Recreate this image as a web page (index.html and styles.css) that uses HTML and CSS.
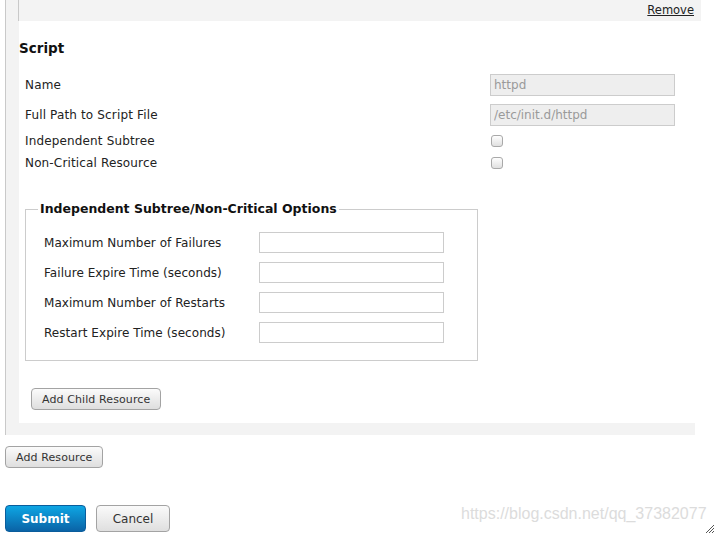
FILE: index.html
```html
<!DOCTYPE html>
<html>
<head>
<meta charset="utf-8">
<title>Resource</title>
<link rel="stylesheet" href="styles.css">
</head>
<body>
<div class="resource">
  <div class="child">
    <div class="child-head"><a href="#" class="remove">Remove</a></div>
    <div class="child-body">
      <h3 class="section-title">Script</h3>
      <div class="form-rows">
        <div class="row row-input"><span class="label">Name</span><input class="text ro" type="text" value="httpd" readonly></div>
        <div class="row row-input"><span class="label">Full Path to Script File</span><input class="text ro" type="text" value="/etc/init.d/httpd" readonly></div>
        <div class="row row-check first-check"><span class="label">Independent Subtree</span><input class="check" type="checkbox"></div>
        <div class="row row-check"><span class="label">Non-Critical Resource</span><input class="check" type="checkbox"></div>
      </div>
      <fieldset class="options">
        <legend>Independent Subtree/Non-Critical Options</legend>
        <div class="opt-row"><span class="opt-label">Maximum Number of Failures</span><input class="text opt" type="text"></div>
        <div class="opt-row"><span class="opt-label">Failure Expire Time (seconds)</span><input class="text opt" type="text"></div>
        <div class="opt-row"><span class="opt-label">Maximum Number of Restarts</span><input class="text opt" type="text"></div>
        <div class="opt-row"><span class="opt-label">Restart Expire Time (seconds)</span><input class="text opt" type="text"></div>
      </fieldset>
      <div class="child-actions"><button class="btn" type="button">Add Child Resource</button></div>
    </div>
  </div>
</div>
<div class="add-res"><button class="btn" type="button">Add Resource</button></div>
<div class="actions">
  <button class="btn-primary" type="button">Submit</button>
  <button class="btn-cancel" type="button">Cancel</button>
</div>
<div class="watermark">https://blog.csdn.net/qq_37382077</div>
<svg class="grip" width="9" height="9" viewBox="0 0 9 9"><path d="M1 9 L9 1 M4 9 L9 4 M7 9 L9 7" stroke="#555" stroke-width="1" fill="none"/></svg>
</body>
</html>
```

FILE: styles.css
```css
html, body {
  margin: 0;
  padding: 0;
  background: #fff;
}
body {
  font-family: "DejaVu Sans", Verdana, sans-serif;
  font-size: 12px;
  color: #222;
  width: 714px;
  height: 533px;
  overflow: hidden;
  position: relative;
}
.resource {
  margin-left: 5px;
  width: 676px;
  border-left: 1px solid #c9c9c9;
  background: #f3f3f3;
  padding-left: 13px;
  padding-bottom: 12px;
  box-sizing: content-box;
}
.resource .child {
  width: 676px;
}
.child-head {
  height: 21px;
  margin-left: -1px;
  margin-right: -6px;
  border-left: 1px solid #c9c9c9;
  background: #f3f3f3;
  text-align: right;
  padding-right: 7px;
  line-height: 20px;
}
.remove {
  color: #222;
  font-size: 11.5px;
  text-decoration: underline;
}
.child-body {
  background: #fff;
  padding-top: 18px;
  padding-bottom: 13px;
}
.section-title {
  margin: 0;
  font-size: 13.5px;
  line-height: 18px;
  font-weight: bold;
  color: #111;
}
.form-rows {
  margin-top: 17px;
  padding-left: 6px;
}
.row {
  display: flex;
  align-items: center;
  height: 22px;
}
.row-input + .row-input {
  margin-top: 8px;
}
.first-check {
  margin-top: 4px;
}
.label {
  width: 465px;
  flex: none;
  letter-spacing: 0.15px;
}
.text {
  box-sizing: border-box;
  height: 22px;
  width: 185px;
  margin: 0;
  border: 1px solid #cccccc;
  background: #fff;
  padding: 0 3px;
  font-family: "DejaVu Sans", Verdana, sans-serif;
  font-size: 12px;
  color: #222;
  outline: none;
}
.text.ro {
  background: #eeeeee;
  color: #9a9a9a;
}
.check {
  appearance: none;
  -webkit-appearance: none;
  width: 12px;
  height: 12px;
  margin: 0 0 0 1px;
  border: 1px solid #a9a9a9;
  border-radius: 3px;
  background: linear-gradient(#fefefe, #e0e0e0);
  box-sizing: border-box;
}
.options {
  margin: 26px 0 0 6px;
  width: 453px;
  box-sizing: border-box;
  min-width: 0;
  border: 1px solid #cccccc;
  padding: 0 0 17px 12px;
}
.options legend {
  padding: 0 2px;
  font-size: 12.5px;
  font-weight: bold;
  line-height: 18px;
  color: #111;
}
.opt-row {
  display: flex;
  align-items: center;
  height: 21px;
  padding-left: 6px;
  margin-top: 9px;
}
.opt-row:first-of-type {
  margin-top: 14px;
}
.opt-label {
  width: 215px;
  flex: none;
  letter-spacing: 0.05px;
}
.text.opt {
  height: 21px;
}
.child-actions {
  margin-top: 27px;
  padding-left: 12px;
}
.btn {
  height: 22px;
  padding: 0 10px;
  border: 1px solid #a3a3a3;
  border-radius: 4px;
  background: linear-gradient(#fbfbfb, #dedede);
  font-family: "DejaVu Sans", Verdana, sans-serif;
  font-size: 11px;
  color: #333;
  letter-spacing: 0.1px;
  cursor: pointer;
  box-sizing: border-box;
}
.add-res {
  margin-top: 11px;
  padding-left: 5px;
}
.actions {
  margin-top: 37px;
  padding-left: 5px;
  display: flex;
  gap: 10px;
}
.btn-primary {
  height: 27px;
  width: 81px;
  padding: 0;
  border: 1px solid #0a5d9c;
  border-radius: 4px;
  background: linear-gradient(#0ea6e4, #0a63a6);
  font-family: "DejaVu Sans", Verdana, sans-serif;
  font-size: 12px;
  font-weight: bold;
  color: #fff;
  box-sizing: border-box;
}
.btn-cancel {
  height: 27px;
  width: 74px;
  padding: 0;
  border: 1px solid #a3a3a3;
  border-radius: 4px;
  background: linear-gradient(#fafafa, #dfdfdf);
  font-family: "DejaVu Sans", Verdana, sans-serif;
  font-size: 12px;
  color: #333;
  box-sizing: border-box;
}
.watermark {
  position: absolute;
  left: 461px;
  top: 504px;
  font-family: "Liberation Sans", Arial, sans-serif;
  font-size: 16px;
  line-height: 20px;
  color: #dcdcdc;
  white-space: nowrap;
}
.grip {
  position: absolute;
  right: 0;
  bottom: 0;
}
```
